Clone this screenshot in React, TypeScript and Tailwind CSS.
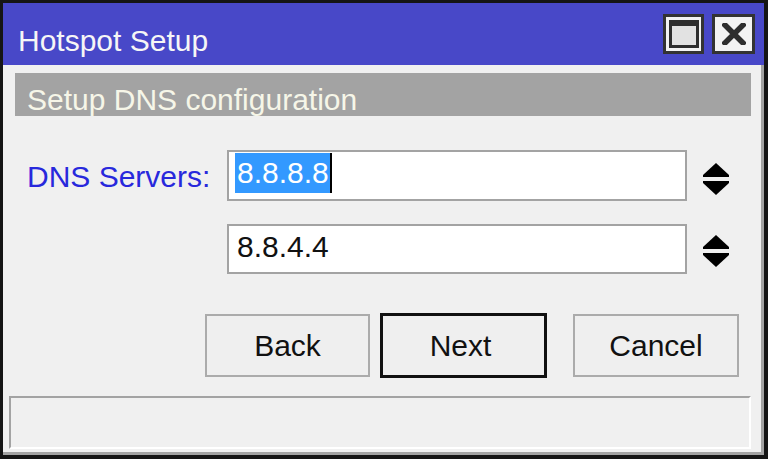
import React from "react";

function MaxIcon() {
  return (
    <svg width="30" height="28" viewBox="0 0 30 28">
      <rect x="1.5" y="1.5" width="27" height="25" fill="#e2e2e2" stroke="#2e2e2e" strokeWidth="3" />
      <rect x="0" y="0" width="30" height="6" fill="#2e2e2e" />
    </svg>
  );
}

function CloseIcon() {
  return (
    <svg width="24" height="22" viewBox="0 0 24 22">
      <path d="M3 2 L21 20 M21 2 L3 20" stroke="#2e2e2e" strokeWidth="5.5" strokeLinecap="square" />
    </svg>
  );
}

function Spinner() {
  return (
    <svg width="26" height="32" viewBox="0 0 26 32" className="shrink-0">
      <polygon points="13,0 26,12 26,14 0,14 0,12" fill="#000" />
      <polygon points="0,18 26,18 26,20 13,32 0,20" fill="#000" />
    </svg>
  );
}

export default function App() {
  return (
    <div className="w-[768px] h-[459px] bg-[#151515] pt-[3px] pl-[3px] pr-[4px] pb-[4px] font-['Liberation_Sans',Arial,sans-serif]">
      <div className="flex flex-col h-full">
        {/* Title bar */}
        <div className="h-[62px] bg-[#4848c8] flex items-center justify-between pl-[15px] pr-[9px] shrink-0">
          <span className="self-start pt-[23px] text-[30px] leading-none text-[#f6f6f6]">Hotspot Setup</span>
          <div className="flex gap-[8px]">
            <div className="w-[41px] h-[40px] bg-[#f3f3f3] border-[3px] border-[#333] flex items-center justify-center">
              <MaxIcon />
            </div>
            <div className="w-[43px] h-[40px] bg-[#f3f3f3] border-[3px] border-[#333] flex items-center justify-center">
              <CloseIcon />
            </div>
          </div>
        </div>

        {/* Body */}
        <div className="flex-1 flex flex-col bg-[#f0f0f0] border-r-[3px] border-b-[3px] border-[#a3a3a3]">
          <div className="mt-[8px] ml-[12px] mr-[10px] h-[43px] bg-[#a3a3a3] pl-[12px] pt-[12px] shrink-0">
            <span className="block text-[30px] leading-none text-[#f6f6e8]">Setup DNS configuration</span>
          </div>

          {/* Row 1 */}
          <div className="mt-[34px] flex items-start pl-[24px] shrink-0">
            <div className="w-[200px] mt-[7px] text-[30px] leading-[40px] text-[#2828dc]">DNS Servers:</div>
            <div className="w-[460px] h-[51px] border-2 border-[#a3a3a3] bg-white pl-[6px] pt-[1px] flex items-start">
              <span className="h-[40px] bg-[#3399ff] text-white text-[30px] leading-[40px] pl-[2px] pr-[1px]">8.8.8.8</span>
              <span className="w-[2px] h-[40px] bg-black"></span>
            </div>
            <div className="ml-[16px] mt-[13px]">
              <Spinner />
            </div>
          </div>

          {/* Row 2 */}
          <div className="mt-[23px] flex items-start pl-[224px] shrink-0">
            <div className="w-[460px] h-[50px] border-2 border-[#a3a3a3] bg-white pl-[6px] pt-[1px] flex items-start">
              <span className="h-[40px] text-[#111] text-[30px] leading-[40px] pl-[2px]">8.8.4.4</span>
            </div>
            <div className="ml-[16px] mt-[11px]">
              <Spinner />
            </div>
          </div>

          {/* Buttons */}
          <div className="mt-[39px] flex items-center pl-[202px] shrink-0">
            <div className="w-[165px] h-[63px] border-2 border-[#ababab] bg-[#efefef] flex items-center justify-center text-[30px] text-[#111]">Back</div>
            <div className="ml-[10px] w-[167px] h-[65px] border-[3px] border-[#111] bg-[#efefef] flex items-center justify-center text-[30px] text-[#111]">
              <span className="-ml-[6px]">Next</span>
            </div>
            <div className="ml-[26px] w-[166px] h-[63px] border-2 border-[#ababab] bg-[#efefef] flex items-center justify-center text-[30px] text-[#111]">Cancel</div>
          </div>

          {/* Status bar */}
          <div className="mt-[18px] ml-[6px] mr-[10px] h-[53px] border-t-2 border-l-2 border-b-2 border-r-2 border-t-[#a3a3a3] border-l-[#a3a3a3] border-b-white border-r-white shrink-0"></div>
        </div>
      </div>
    </div>
  );
}
